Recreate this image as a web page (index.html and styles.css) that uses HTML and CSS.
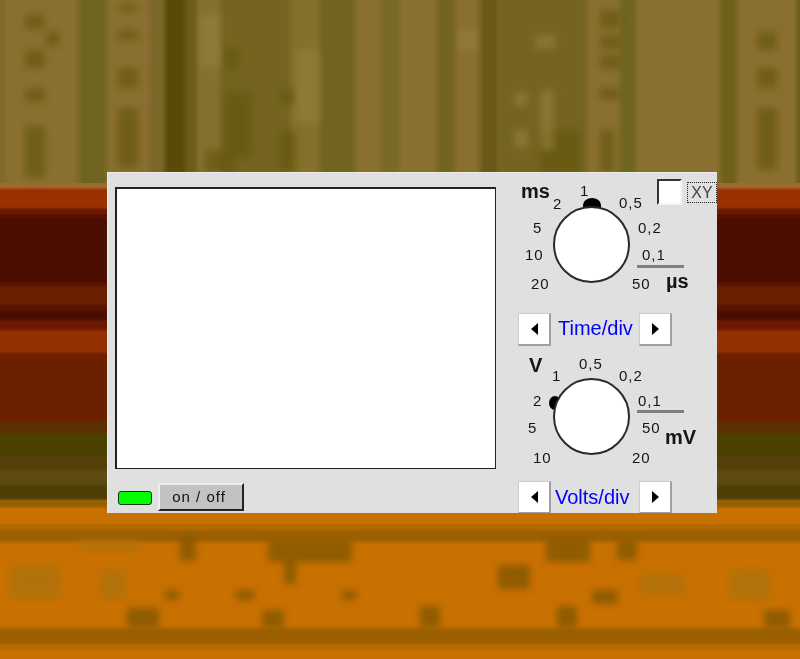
FILE: index.html
```html
<!DOCTYPE html>
<html lang="en">
<head>
    <meta charset="UTF-8">
    <meta name="viewport" content="width=device-width, initial-scale=1.0">
    <title>Oscilloscope</title>
    <link rel="stylesheet" href="styles.css">
</head>
<body>
<svg class="texture" width="800" height="659" viewBox="0 0 800 659" aria-hidden="true">
    <defs>
        <filter id="soft" x="-5%" y="-5%" width="110%" height="110%"><feGaussianBlur stdDeviation="3.5"/></filter>
    </defs>
    <g filter="url(#soft)" fill="#65570f" opacity="0.7">
        <rect x="25" y="15" width="20" height="14"/>
        <rect x="46" y="32" width="14" height="14"/>
        <rect x="25" y="50" width="20" height="18"/>
        <rect x="25" y="88" width="20" height="14"/>
        <rect x="25" y="126" width="20" height="52"/>
        <rect x="118" y="5" width="20" height="6"/>
        <rect x="118" y="30" width="20" height="10"/>
        <rect x="118" y="68" width="20" height="20"/>
        <rect x="118" y="108" width="20" height="60"/>
        <rect x="225" y="48" width="14" height="20"/>
        <rect x="225" y="92" width="26" height="66"/>
        <rect x="280" y="90" width="14" height="14"/>
        <rect x="280" y="130" width="16" height="42"/>
        <rect x="205" y="150" width="30" height="22"/>
        <rect x="600" y="10" width="20" height="18"/>
        <rect x="600" y="35" width="20" height="14"/>
        <rect x="600" y="55" width="20" height="14"/>
        <rect x="600" y="88" width="20" height="12"/>
        <rect x="600" y="130" width="14" height="42"/>
        <rect x="757" y="32" width="20" height="18"/>
        <rect x="757" y="68" width="20" height="20"/>
        <rect x="757" y="108" width="20" height="62"/>
        <rect x="540" y="130" width="40" height="42"/>
    </g>
    <g filter="url(#soft)" fill="#94823c" opacity="0.6">
        <rect x="200" y="15" width="20" height="52"/>
        <rect x="297" y="50" width="22" height="72"/>
        <rect x="460" y="30" width="16" height="20"/>
        <rect x="514" y="92" width="14" height="14"/>
        <rect x="514" y="130" width="14" height="18"/>
        <rect x="540" y="90" width="14" height="60"/>
        <rect x="535" y="35" width="20" height="14"/>
    </g>
    <g filter="url(#soft)" fill="#8a5a00" opacity="0.9">
        <rect x="180" y="535" width="16" height="26"/>
        <rect x="268" y="540" width="84" height="22"/>
        <rect x="284" y="562" width="12" height="22"/>
        <rect x="165" y="590" width="14" height="10"/>
        <rect x="236" y="590" width="18" height="10"/>
        <rect x="342" y="590" width="14" height="10"/>
        <rect x="127" y="608" width="32" height="20"/>
        <rect x="262" y="610" width="22" height="18"/>
        <rect x="546" y="538" width="44" height="24"/>
        <rect x="617" y="540" width="20" height="20"/>
        <rect x="498" y="565" width="32" height="24"/>
        <rect x="592" y="590" width="26" height="14"/>
        <rect x="420" y="606" width="20" height="22"/>
        <rect x="557" y="606" width="20" height="22"/>
        <rect x="764" y="610" width="26" height="18"/>
    </g>
    <g filter="url(#soft)" fill="#ad7208" opacity="0.8">
        <rect x="10" y="565" width="50" height="34"/>
        <rect x="100" y="570" width="25" height="30"/>
        <rect x="730" y="570" width="40" height="30"/>
        <rect x="80" y="540" width="60" height="10"/>
        <rect x="640" y="575" width="45" height="20"/>
    </g>
</svg>

<main class="scope">
    <div class="display">
        <div class="screen"></div>
        <div class="power">
            <span class="led"></span>
            <button class="power-btn" type="button">on / off</button>
        </div>
    </div>

    <div class="controls">
        <div class="dial-block time-dial">
            <div class="pointer"></div>
            <div class="knob"></div>
            <b class="unit ms">ms</b>
            <span class="mark t2">2</span>
            <span class="mark t1">1</span>
            <span class="mark t05">0,5</span>
            <span class="mark t5">5</span>
            <span class="mark t02">0,2</span>
            <span class="mark t10">10</span>
            <span class="mark t01">0,1</span>
            <span class="mark t20">20</span>
            <span class="mark t50">50</span>
            <b class="unit us">µs</b>
            <div class="rule"></div>
            <label class="xy">
                <span class="check"></span>
                <span class="xy-text">XY</span>
            </label>
        </div>
        <div class="stepper time-step">
            <button class="step" type="button"><span class="arrow left"></span></button>
            <span class="step-label">Time/div</span>
            <button class="step" type="button"><span class="arrow right"></span></button>
        </div>

        <div class="dial-block volt-dial">
            <div class="pointer"></div>
            <div class="knob"></div>
            <b class="unit v">V</b>
            <span class="mark v1">1</span>
            <span class="mark v05">0,5</span>
            <span class="mark v02">0,2</span>
            <span class="mark v2">2</span>
            <span class="mark v01">0,1</span>
            <span class="mark v5">5</span>
            <span class="mark v50">50</span>
            <b class="unit mv">mV</b>
            <span class="mark v10">10</span>
            <span class="mark v20">20</span>
            <div class="rule"></div>
        </div>
        <div class="stepper volt-step">
            <button class="step" type="button"><span class="arrow left"></span></button>
            <span class="step-label">Volts/div</span>
            <button class="step" type="button"><span class="arrow right"></span></button>
        </div>
    </div>
</main>
</body>
</html>
```

FILE: styles.css
```css
html, body {
    margin: 0;
    height: 659px;
    overflow: hidden;
}
body {
    position: relative;
    font-family: "Liberation Sans", Arial, sans-serif;
    background-color: #c87000;
    background-repeat: no-repeat;
    background-size: 100% 183px, 100% 100%;
    background-image:
        linear-gradient(90deg,
            #80692a 0 3px, #8a7030 8px 73px, #6f6420 83px 102px, #8a7030 112px 146px,
            #7a6628 154px 162px, #5a4a08 168px 182px, #6f5c18 188px 194px, #857030 200px 216px,
            #746420 224px 286px, #85702c 294px 316px, #706420 324px 351px, #8a7030 359px 376px,
            #7a6a28 384px 396px, #8a7030 404px 433px, #746220 441px 451px, #8a7030 459px 476px,
            #6a5818 484px 494px, #746420 500px 583px, #8a7030 591px 616px, #6f6420 624px 632px,
            #8a7030 640px 716px, #6f6018 724px 733px, #8a7030 741px 794px, #6f6018 798px 800px),
        linear-gradient(180deg,
            #8a7030 0 181px, #9c6a30 184px 187px, #9c3000 190px 207px, #6a1a00 210px 213px,
            #5a1200 215px 217px, #4c0e00 220px 281px, #5a1500 284px 285px, #6a2000 288px 303px,
            #5a1500 306px 309px, #4c0c00 312px 318px, #6a1a00 322px 328px, #943000 332px 351px,
            #6c2000 355px 419px, #5c3000 423px 431px, #4a4000 436px 453px, #544008 458px 468px,
            #5c4c10 472px 483px, #4e3e08 487px 498px, #986000 501px 506px, #c87000 509px 523px,
            #b06800 526px 529px, #9c6000 532px 539px, #c87000 545px 625px, #9c6000 631px 643px,
            #b86c00 646px 649px, #c87000 652px 659px);
}
.texture {
    position: absolute;
    left: 0;
    top: 0;
}

.scope {
    position: absolute;
    left: 107px;
    top: 172px;
    width: 610px;
    height: 341px;
    box-sizing: border-box;
    display: flex;
    padding-left: 8px;
    overflow: hidden;
    background-color: #e0e0e0;
    border-top: 1px solid #ececec;
    border-left: 1px solid #ececec;
}

.display {
    width: 381px;
    margin-left: -1px;
    padding-top: 14px;
}
.screen {
    box-sizing: border-box;
    height: 282px;
    background-color: #fff;
    border: 2px solid #222;
    border-right-width: 1px;
    border-bottom-width: 1px;
}
.power {
    display: flex;
    align-items: center;
    gap: 6px;
    margin-top: 14px;
    padding-left: 3px;
}
.led {
    box-sizing: border-box;
    width: 34px;
    height: 14px;
    margin-top: 1px;
    background-color: #00ff00;
    border: 1px solid #0a3a0a;
    border-radius: 3px;
}
.power-btn {
    box-sizing: border-box;
    width: 86px;
    height: 28px;
    padding: 0 4px 2px 0;
    background-color: #c2c2c2;
    color: #111;
    font: 15px "Liberation Sans", Arial, sans-serif;
    letter-spacing: 1px;
    border: 2px solid;
    border-color: #eee #222 #222 #eee;
    filter: blur(0.3px);
}

.controls {
    margin-left: 22px;
    margin-top: -1px;
    width: 199px;
}
.dial-block {
    position: relative;
}
.time-dial {
    height: 141px;
}
.volt-dial {
    height: 136px;
}
.knob {
    position: absolute;
    left: 35px;
    box-sizing: border-box;
    width: 77px;
    height: 77px;
    background-color: #fff;
    border: 2px solid #2a2a2a;
    border-radius: 50%;
}
.time-dial .knob {
    top: 34px;
}
.volt-dial .knob {
    top: 33px;
}
.pointer {
    position: absolute;
    background-color: #000;
}
.time-dial .pointer {
    left: 65px;
    top: 26px;
    width: 18px;
    height: 12px;
    border-radius: 9px 9px 0 0 / 7px 7px 0 0;
}
.volt-dial .pointer {
    left: 31px;
    top: 51px;
    width: 12px;
    height: 14px;
    border-radius: 50%;
}

.mark, .unit {
    position: absolute;
    color: #151515;
    font-size: 15px;
    line-height: 1;
    letter-spacing: 1px;
    filter: blur(0.3px);
}
.unit {
    font-size: 20px;
    font-weight: bold;
    letter-spacing: 0;
}
.ms { left: 3px; top: 9px; }
.t2 { left: 35px; top: 24px; }
.t1 { left: 62px; top: 11px; }
.t05 { left: 101px; top: 23px; }
.t5 { left: 15px; top: 48px; }
.t02 { left: 120px; top: 48px; }
.t10 { left: 7px; top: 75px; }
.t01 { left: 124px; top: 75px; }
.t20 { left: 13px; top: 104px; }
.t50 { left: 114px; top: 104px; }
.us { left: 148px; top: 99px; }

.v { left: 11px; top: 10px; }
.v1 { left: 34px; top: 23px; }
.v05 { left: 61px; top: 11px; }
.v02 { left: 101px; top: 23px; }
.v2 { left: 15px; top: 48px; }
.v01 { left: 120px; top: 48px; }
.v5 { left: 10px; top: 75px; }
.v50 { left: 124px; top: 75px; }
.mv { left: 147px; top: 82px; }
.v10 { left: 15px; top: 105px; }
.v20 { left: 114px; top: 105px; }

.rule {
    position: absolute;
    left: 119px;
    width: 47px;
    height: 3px;
    background-color: #808080;
}
.time-dial .rule {
    top: 93px;
}
.volt-dial .rule {
    top: 65px;
}

.xy {
    position: absolute;
    left: 139px;
    top: 7px;
    display: flex;
    align-items: center;
    gap: 5px;
}
.check {
    box-sizing: border-box;
    width: 25px;
    height: 26px;
    background-color: #fff;
    border: 2px solid;
    border-color: #333 #f4f4f4 #f4f4f4 #333;
}
.xy-text {
    box-sizing: border-box;
    width: 30px;
    height: 21px;
    border: 1px dotted #222;
    color: #444;
    font-size: 16px;
    line-height: 19px;
    text-align: center;
    filter: blur(0.3px);
}

.stepper {
    display: flex;
    height: 32px;
}
.step {
    display: flex;
    align-items: center;
    justify-content: center;
    box-sizing: border-box;
    width: 33px;
    height: 33px;
    padding: 0;
    background-color: #fff;
    border: 1px solid;
    border-color: #ccc #a0a0a0 #a0a0a0 #ccc;
    border-right-width: 2px;
    border-bottom-width: 2px;
}
.arrow {
    width: 0;
    height: 0;
    border-top: 6px solid transparent;
    border-bottom: 6px solid transparent;
}
.arrow.left {
    border-right: 7px solid #000;
}
.arrow.right {
    border-left: 7px solid #000;
}
.step-label {
    box-sizing: border-box;
    width: 88px;
    overflow: hidden;
    color: #0000ff;
    font-size: 20px;
    line-height: 30px;
    white-space: nowrap;
    filter: blur(0.3px);
}
.time-step .step-label {
    padding-left: 7px;
}
.volt-step .step-label {
    padding-left: 4px;
    padding-top: 1px;
}
```
